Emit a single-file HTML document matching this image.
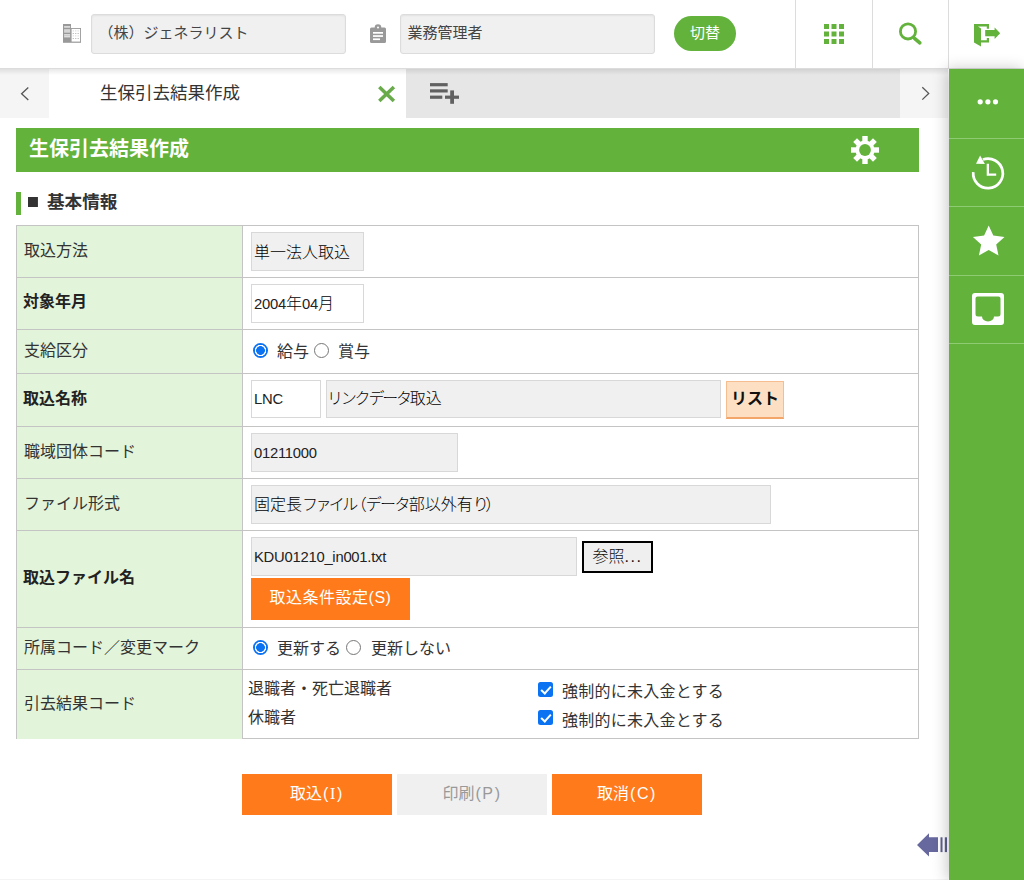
<!DOCTYPE html>
<html lang="ja">
<head>
<meta charset="utf-8">
<title>生保引去結果作成</title>
<style>
*{box-sizing:border-box;margin:0;padding:0}
html,body{width:1024px;height:880px;overflow:hidden;background:#fff}
body{font-family:"Liberation Sans","Noto Sans CJK JP",sans-serif;color:#333;position:relative;font-size:16px}
.abs{position:absolute}
svg{position:absolute;overflow:visible}
/* header */
#hdr{position:absolute;left:0;top:0;width:1024px;height:69px;background:#fff;border-bottom:1px solid #dcdcdc;z-index:5}
#hdrsh{position:absolute;left:0;top:69px;width:948px;height:6px;background:linear-gradient(rgba(0,0,0,.09),rgba(0,0,0,0));z-index:6}
.hin{position:absolute;top:14px;height:40px;width:255px;background:#f0f0f0;border:1px solid #dcdcdc;border-radius:3px;box-shadow:inset 0 1px 2px rgba(0,0,0,.06);font-size:15px;line-height:35px;color:#444;padding-left:6.500px;white-space:nowrap;overflow:hidden}
#sw{position:absolute;left:674px;top:16px;width:62px;height:35px;border-radius:17.500px;background:#62b23c;color:#fff;font-size:15px;line-height:33px;text-align:center}
.vd{position:absolute;top:0;width:1px;height:68px;background:#dcdcdc}
/* sidebar */
#side{position:absolute;left:949px;top:69px;width:75px;height:811px;background:#62b23c;z-index:7;box-shadow:-2px 0 14px rgba(0,0,0,.22)}
#side .sep{position:absolute;left:0;width:75px;height:1px;background:#8ecb72}
/* tabs */
#tabs{position:absolute;left:0;top:69px;width:948px;height:49px;background:#e6e6e6}
#tabs .arr{position:absolute;top:0;height:49px;background:#f5f5f5}
#tabs .act{position:absolute;left:49px;top:0;width:357px;height:49px;background:#fff;font-size:17.5px;line-height:49px;color:#333;padding-left:51px}
/* title */
#ttl{position:absolute;left:16px;top:128px;width:903px;height:44px;background:#62b23c;color:#fff;font-weight:bold;font-size:20px;line-height:42px;padding-left:13px}
#sec{position:absolute;left:16px;top:192px;height:23px;border-left:5px solid #62b23c;padding-left:26px;font-weight:bold;font-size:17.6px;line-height:20px;color:#333;white-space:nowrap}
#sec b{position:absolute;left:7px;top:5px;width:10px;height:10px;overflow:hidden;font-size:22px;line-height:10px;color:#333;text-indent:-2px}
/* table */
#tb{position:absolute;left:16px;top:225px;width:903px;height:514px;border:1px solid #c4c4c4;border-top:0}
.row{position:absolute;left:0;width:901px;border-top:1px solid #c4c4c4}
.row .l{position:absolute;left:0;top:0;width:226px;height:100%;background:#e2f4da;border-right:1px solid #c4c4c4;padding-left:7px;font-size:16px;color:#333;display:flex;align-items:center;padding-bottom:5px}
.row .l.b{font-weight:bold;color:#222;padding-bottom:7px;padding-left:6px}
.in{position:absolute;height:39px;border:1px solid #d8d8d8;background:#f0f0f0;line-height:38px;padding-left:2px;font-size:16px;font-weight:300;color:#000;white-space:nowrap;overflow:hidden}
.in .k{letter-spacing:-2.6px}
.in .d{font-size:14.8px;font-weight:400;color:#222;letter-spacing:-.25px}
.in.w{background:#fff}
.t{position:absolute;white-space:nowrap;font-size:16px;color:#333;line-height:20px}
.rd{position:absolute;width:15px;height:15px;border-radius:50%;border:1px solid #767676;background:#fff}
.rd.on{border:0;background:radial-gradient(circle closest-side,#0b72f2 0,#0b72f2 54%,#fff 62%,#fff 72%,#0b72f2 80%,#0b72f2 100%)}
.cb{position:absolute;width:15px;height:15px;border-radius:2.5px;background:#0b72f2}
.cb::after{content:"";position:absolute;left:5px;top:2px;width:4px;height:8px;border:solid #fff;border-width:0 2px 2px 0;transform:rotate(42deg)}
.btn .p{letter-spacing:1.6px;margin-left:1px}
.btn{position:absolute;top:774px;width:150px;height:41px;background:#ff7a1a;color:#fff;font-size:16px;line-height:40px;text-align:center}
</style>
</head>
<body>
<div id="hdr">
  <svg style="left:63px;top:24px" width="18" height="19" viewBox="0 0 18 19"><rect x="0" y="0" width="8" height="18.800" fill="#999"/><rect x="1.100" y="2.100" width="6" height="1.600" fill="#e2e2e2"/><rect x="1.100" y="5.300" width="6" height="3.300" fill="#e2e2e2"/><rect x="1.100" y="6.700" width="6" height=".600" fill="#b5b5b5"/><rect x="1.100" y="10.100" width="6" height="3.300" fill="#e2e2e2"/><rect x="1.100" y="11.500" width="6" height=".600" fill="#b5b5b5"/><rect x="8" y="4" width="10" height="14.800" fill="#999"/><rect x="8.600" y="4.900" width="8.500" height="12.700" fill="#fff"/><rect x="9.7" y="6.4" width="1.100" height="1.0" fill="#d0d0d0"/><rect x="12.2" y="6.4" width="1.100" height="1.0" fill="#d0d0d0"/><rect x="14.6" y="6.4" width="1.100" height="1.0" fill="#d0d0d0"/><rect x="9.7" y="9.0" width="1.100" height="0.9" fill="#aaa"/><rect x="12.2" y="9.0" width="1.100" height="0.9" fill="#aaa"/><rect x="14.6" y="9.0" width="1.100" height="0.9" fill="#aaa"/><rect x="9.7" y="11.4" width="1.100" height="1.0" fill="#d0d0d0"/><rect x="12.2" y="11.4" width="1.100" height="1.0" fill="#d0d0d0"/><rect x="14.6" y="11.4" width="1.100" height="1.0" fill="#d0d0d0"/><rect x="9.7" y="14.1" width="1.100" height="0.9" fill="#aaa"/><rect x="12.2" y="14.1" width="1.100" height="0.9" fill="#aaa"/><rect x="14.6" y="14.1" width="1.100" height="0.9" fill="#aaa"/></svg>
  <div class="hin" style="left:91px">（株）ジェネラリスト</div>
  <svg style="left:370px;top:25px" width="16" height="18" viewBox="0 0 16 18"><path d="M1.5 2.5h3.2a3.3 3.3 0 0 1 6.6 0h3.2a1.5 1.5 0 0 1 1.5 1.5v12.5a1.5 1.5 0 0 1-1.5 1.500h-13a1.500 1.500 0 0 1-1.500-1.500v-12.500a1.500 1.500 0 0 1 1.500-1.500z" fill="#999"/><circle cx="8" cy="2.600" r="1" fill="#fff"/><rect x="3" y="7" width="10" height="1.700" fill="#fff"/><rect x="3" y="10.200" width="10" height="1.700" fill="#fff"/><rect x="3" y="13.400" width="7" height="1.700" fill="#fff"/></svg>
  <div class="hin" style="left:400px">業務管理者</div>
  <div id="sw">切替</div>
  <div class="vd" style="left:795px"></div>
  <div class="vd" style="left:872px"></div>
  <div class="vd" style="left:948px"></div>
  <svg style="left:824px;top:24px" width="20" height="20" viewBox="0 0 20 20" fill="#62b23c"><rect x="0" y="0" width="5" height="5"/><rect x="7.5" y="0" width="5" height="5"/><rect x="15" y="0" width="5" height="5"/><rect x="0" y="7.500" width="5" height="5"/><rect x="7.500" y="7.500" width="5" height="5"/><rect x="15" y="7.500" width="5" height="5"/><rect x="0" y="15" width="5" height="5"/><rect x="7.500" y="15" width="5" height="5"/><rect x="15" y="15" width="5" height="5"/></svg>
  <svg style="left:895px;top:20px" width="30" height="30" viewBox="895 20 30 30"><circle cx="908" cy="31.400" r="7.600" fill="none" stroke="#62b23c" stroke-width="2.800"/><line x1="914.500" y1="38.300" x2="919.800" y2="42.800" stroke="#62b23c" stroke-width="3.600" stroke-linecap="round"/></svg>
  <svg style="left:970px;top:20px" width="34" height="30" viewBox="970 20 34 30"><path fill="#62b23c" d="M974 24H989V28.700H986.800V26.400H978L981 28.400V40.200H986.800V38.100H989V42.500H981V46.600L974 42.500Z"/><path fill="#62b23c" d="M985.200 30H994.600V27.600L1000.200 33.300L994.600 38.900V36.200H985.200Z"/></svg>
</div>
<div id="hdrsh"></div>
<div id="tabs">
  <div class="arr" style="left:0;width:49px"></div>
  <div class="act">生保引去結果作成</div>
  <div class="arr" style="left:900px;width:48px"></div>
  <svg style="left:0;top:0" width="948" height="49" viewBox="0 69 948 49"><path d="M28.300 87.500L21.600 93.700L28.300 100" fill="none" stroke="#555" stroke-width="1.300"/><path d="M922.300 87.300L928.700 93.400L922.300 99.600" fill="none" stroke="#555" stroke-width="1.300"/><path d="M379.300 86.900L393.900 101.100M393.900 86.900L379.300 101.100" stroke="#69ab4b" stroke-width="3.500" fill="none"/><g fill="#616161"><rect x="430" y="83.100" width="17.700" height="3.200"/><rect x="430" y="89.300" width="17.700" height="3.200"/><rect x="430" y="95.600" width="12.300" height="3.200"/><rect x="445" y="95.600" width="14" height="3.200"/><rect x="450.200" y="90.400" width="3.800" height="13.400"/></g></svg>
</div>
<div id="side">
  <div class="sep" style="top:69px"></div>
  <div class="sep" style="top:137px"></div>
  <div class="sep" style="top:206px"></div>
  <div class="sep" style="top:274px"></div>
  <svg style="left:0;top:0" width="75" height="300" viewBox="949 69 75 300">
    <g fill="#fff"><circle cx="980.200" cy="101.800" r="2.600"/><circle cx="987.900" cy="101.800" r="2.600"/><circle cx="995.500" cy="101.800" r="2.600"/></g>
    <path d="M973.260 172.100A14.800 14.800 0 1 0 982.900 159.500" fill="none" stroke="#fff" stroke-width="2.700"/>
    <path d="M976 163.800L980.100 155.500L984.900 163.900Z" fill="#fff"/>
    <path d="M987.850 163.800V174.650H996.200" fill="none" stroke="#fff" stroke-width="2.300"/>
    <path fill="#fff" d="M988.7 225.4L993.3 235.6L1004.5 236.9L996.2 244.4L998.5 255.4L988.7 249.9L978.9 255.4L981.2 244.4L972.9 236.9L984.1 235.6Z"/>
    <path fill="#fff" fill-rule="evenodd" d="M975 293H1001A3 3 0 0 1 1004 296V322A3 3 0 0 1 1001 325H975A3 3 0 0 1 972 322V296A3 3 0 0 1 975 293ZM977.500 296.500A2 2 0 0 0 975.500 298.500V314A2.500 2.500 0 0 0 978 316.500H982A6 5 0 0 0 994 316.500H998A2.500 2.500 0 0 0 1000.500 314V298.500A2 2 0 0 0 998.500 296.500Z"/>
  </svg>
</div>
<div id="ttl">生保引去結果作成
  <svg style="left:834px;top:7px" width="30" height="30" viewBox="-15 -15 30 30"><g fill="#fff"><circle r="9.600"/><g id="tg"><rect x="-2.700" y="-14" width="5.400" height="28"/><rect x="-14" y="-2.700" width="28" height="5.400"/></g><use href="#tg" transform="rotate(45)"/></g><circle r="5.900" fill="#62b23c"/></svg>
</div>
<div id="sec"><b>■</b>基本情報</div>
<div id="tb">
  <div class="row" style="top:0px;height:52px"><div class="l">取込方法</div><span class="in" style="left:234px;top:6px;width:113px;line-height:39.500px">単一法人取込</span></div>
  <div class="row" style="top:52px;height:52px"><div class="l b">対象年月</div><span class="in w" style="left:234px;top:6px;width:113px"><span class="d">2004</span>年<span class="d">04</span>月</span></div>
  <div class="row" style="top:104px;height:44px"><div class="l">支給区分</div><i class="rd on" style="left:236px;top:13px"></i><span class="t" style="left:260px;top:12px">給与</span><i class="rd" style="left:297px;top:13px"></i><span class="t" style="left:321px;top:12px">賞与</span></div>
  <div class="row" style="top:148px;height:53px"><div class="l b">取込名称</div><span class="in w" style="left:234px;top:6px;width:70px;height:38px;line-height:36px"><span class="d">LNC</span></span><span class="in" style="left:309px;top:6px;width:395px;height:38px;line-height:36px;padding-left:0"><span class="k" style="letter-spacing:-2.2px">リンクデータ</span>取込</span><span class="abs" style="left:709px;top:7px;width:58px;height:38px;background:#fde0c4;border:1px solid #f6bd8e;border-bottom:2px solid #f3a66a;font-weight:bold;font-size:16px;line-height:34px;text-align:center;color:#111">リスト</span></div>
  <div class="row" style="top:201px;height:52px"><div class="l">職域団体コード</div><span class="in" style="left:234px;top:6px;width:207px"><span class="d">01211000</span></span></div>
  <div class="row" style="top:253px;height:52px"><div class="l">ファイル形式</div><span class="in" style="left:234px;top:6px;width:520px">固定長<span class="k">ファイル</span><span style="margin-left:-5px">（</span><span style="letter-spacing:-1.6px;margin-left:-1px">データ</span>部以外有<span class="k">り</span><span style="margin-left:-1px">）</span></span></div>
  <div class="row" style="top:305px;height:97px"><div class="l b">取込ファイル名</div><span class="in" style="left:234px;top:6px;width:326px"><span class="d">KDU01210_in001.txt</span></span><span class="abs" style="left:565px;top:10px;width:71px;height:32px;border:2px solid #000;background:#efefef;font-size:16px;line-height:27px;text-align:center;color:#111;font-weight:300">参照<span style="letter-spacing:1.5px">...</span></span><span class="abs" style="left:234px;top:47px;width:159px;height:42px;background:#ff7a1a;color:#fff;font-size:16px;line-height:40px;text-align:center;letter-spacing:.5px">取込条件設定(S)</span></div>
  <div class="row" style="top:402px;height:42px"><div class="l">所属コード／変更マーク</div><i class="rd on" style="left:236px;top:12px"></i><span class="t" style="left:260px;top:11px">更新する</span><i class="rd" style="left:329px;top:12px"></i><span class="t" style="left:354px;top:11px">更新しない</span></div>
  <div class="row" style="top:444px;height:70px"><div class="l">引去結果コード</div><span class="t" style="left:231px;top:9px">退職者・死亡退職者</span><span class="t" style="left:231px;top:38px">休職者</span>
    <i class="cb" style="left:521px;top:12px"></i><span class="t" style="left:545px;top:12px;letter-spacing:.25px">強制的に未入金とする</span>
    <i class="cb" style="left:521px;top:40px"></i><span class="t" style="left:545px;top:41px;letter-spacing:.25px">強制的に未入金とする</span></div>
</div>
<div class="btn" style="left:242px">取込<span class="p">(<span style="font-family:'Liberation Serif',serif">I</span>)</span></div>
<div class="btn" style="left:397px;background:#f0f0f0;color:#999">印刷<span class="p">(P)</span></div>
<div class="btn" style="left:552px">取消<span class="p">(C)</span></div>
<svg style="left:915px;top:830px" width="34" height="30" viewBox="915 830 34 30"><path fill="#66689e" d="M917 845L929 833.200V837.300H938V852.100H929V856.600Z"/><rect x="940.500" y="837.300" width="2" height="14.800" fill="#5d5f90"/><rect x="944.800" y="837.300" width="2.200" height="14.800" fill="#5d5f90"/></svg>
<div class="abs" style="left:0;top:879px;width:948px;height:1px;background:#f4f4f4"></div>
</body>
</html>
